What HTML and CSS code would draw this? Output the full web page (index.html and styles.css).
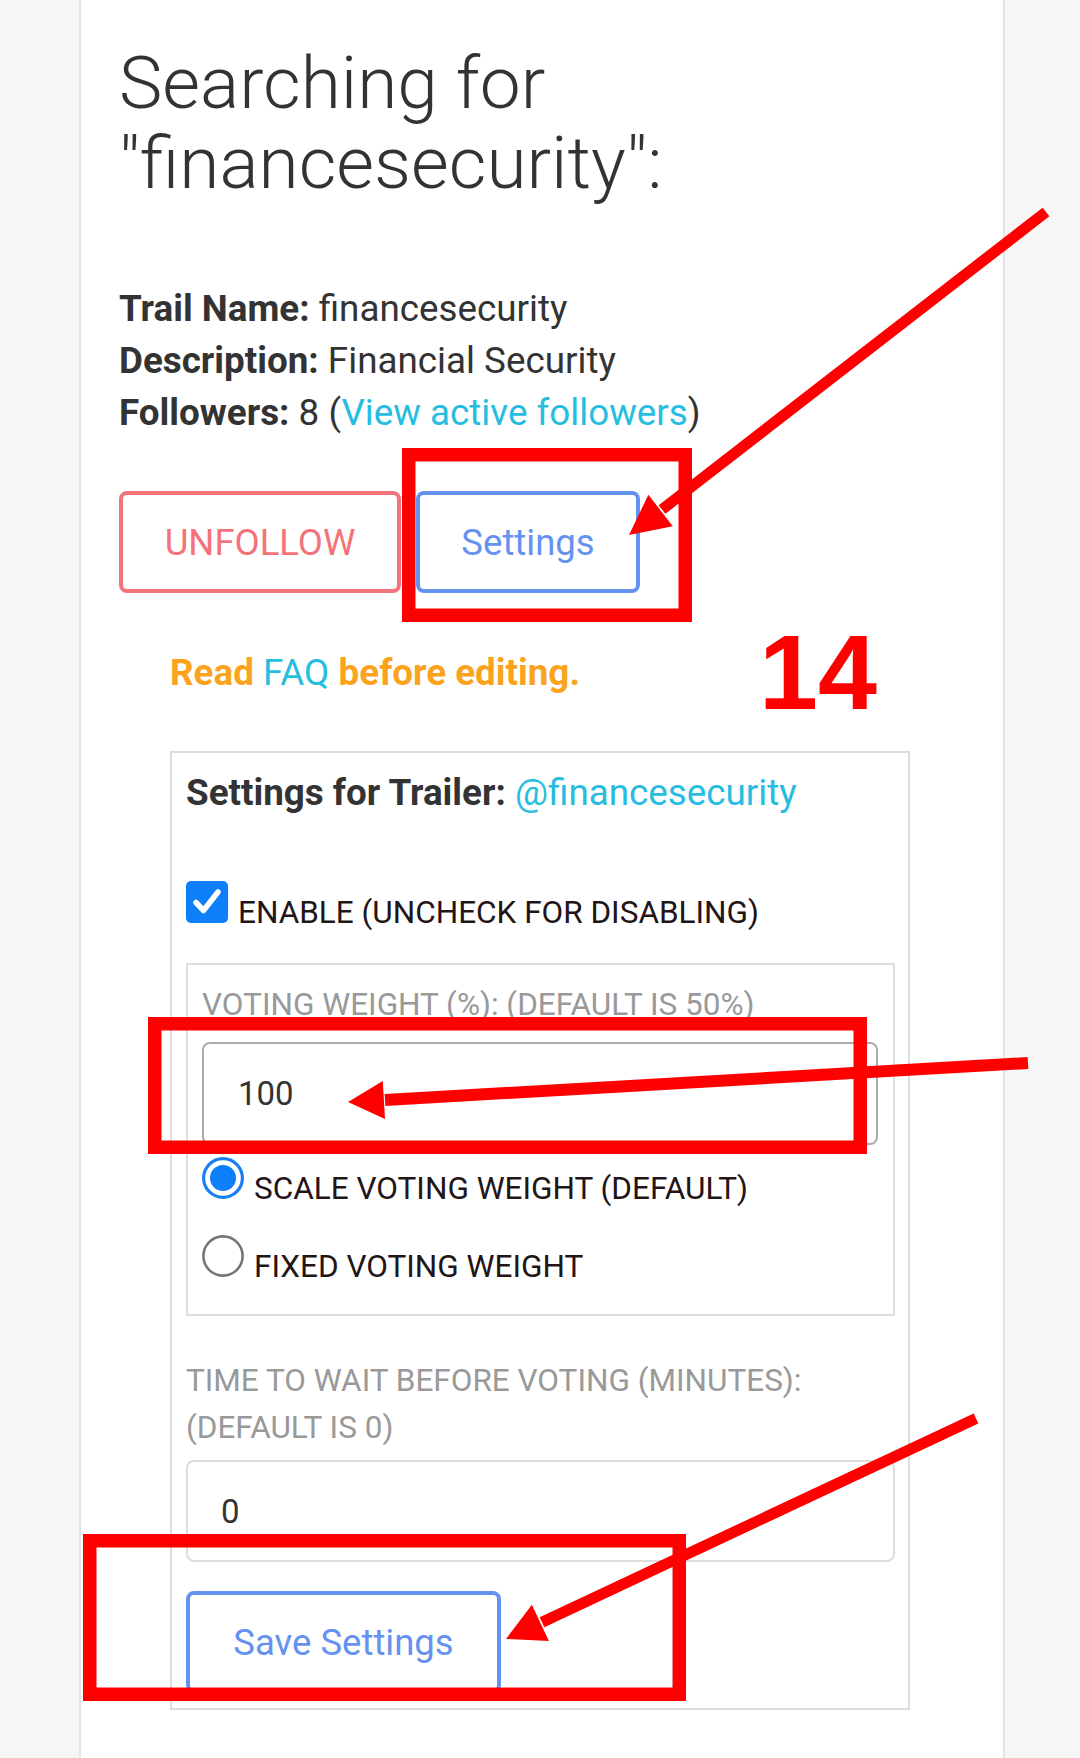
FILE: index.html
```html
<!DOCTYPE html>
<html lang="en">
<head>
<meta charset="utf-8">
<title>Searching for financesecurity</title>
<link rel="stylesheet" href="styles.css">
</head>
<body>
<div class="page">
  <div class="card">
    <h1 class="title">Searching for<br>"financesecurity":</h1>
    <div class="info">
      <div><b>Trail Name:</b> financesecurity</div>
      <div><b>Description:</b> Financial Security</div>
      <div><b>Followers:</b> 8 (<a class="link" href="#">View active followers</a>)</div>
    </div>
    <div class="actions">
      <div class="btn btn-unfollow">UNFOLLOW</div>
      <div class="btn btn-blue btn-settings">Settings</div>
    </div>
    <div class="editor">
      <div class="faq">Read <a class="link faq-link" href="#">FAQ</a> before editing.</div>
      <div class="panel">
        <div class="panel-title">Settings for Trailer: <a class="link panel-link" href="#">@financesecurity</a></div>
        <div class="check-row"><span class="checkbox"><svg viewBox="0 0 42 42" width="42" height="42"><rect x="0" y="0" width="42" height="42" rx="5" fill="#0d7ffb"/><path d="M10 21.5 L17.5 29.5 L32 11" fill="none" stroke="#fff" stroke-width="5.5" stroke-linecap="round" stroke-linejoin="round"/></svg></span>ENABLE (UNCHECK FOR DISABLING)</div>
        <div class="fieldset">
          <div class="field-label">VOTING WEIGHT (%): (DEFAULT IS 50%)</div>
          <div class="input input-dark">100</div>
          <div class="radio-row radio-row-first"><span class="radio"><svg viewBox="0 0 42 42" width="42" height="42"><circle cx="21" cy="21" r="19.4" fill="#fff" stroke="#1a7ef5" stroke-width="3.2"/><circle cx="21" cy="21" r="13" fill="#0d7ffb"/></svg></span>SCALE VOTING WEIGHT (DEFAULT)</div>
          <div class="radio-row radio-row-second"><span class="radio"><svg viewBox="0 0 42 42" width="42" height="42"><circle cx="21" cy="21" r="19.6" fill="#fff" stroke="#757575" stroke-width="2.6"/></svg></span>FIXED VOTING WEIGHT</div>
        </div>
        <div class="time-label">TIME TO WAIT BEFORE VOTING (MINUTES): (DEFAULT IS 0)</div>
        <div class="input input-light">0</div>
        <div class="btn btn-blue btn-save">Save Settings</div>
      </div>
    </div>
  </div>

  <svg class="annotations" viewBox="0 0 1080 1758" width="1080" height="1758">
    <g fill="none" stroke="#fe0000" stroke-width="13.5">
      <rect x="408.75" y="454.75" width="276.5" height="160.5"/>
      <rect x="154.75" y="1023.75" width="705.5" height="123.5"/>
      <rect x="89.75" y="1540.75" width="589.5" height="153.5"/>
    </g>
    <g stroke="#fe0000" fill="#fe0000">
      <line x1="1046" y1="212" x2="662" y2="509.5" stroke-width="11"/>
      <polygon points="629,535 672.8,526.3 648.4,494.7" stroke="none"/>
      <line x1="1028" y1="1063" x2="385" y2="1100" stroke-width="12"/>
      <polygon points="348,1102 385,1118.9 382.8,1080.9" stroke="none"/>
      <line x1="976" y1="1418.5" x2="542" y2="1622.2" stroke-width="11"/>
      <polygon points="506,1639 548.9,1641 531.9,1604.8" stroke="none"/>
    </g>
    <text class="step-number" x="759" y="709">14</text>
  </svg>
</div>
</body>
</html>
```
FILE: styles.css
```css
html, body {
  margin: 0;
  padding: 0;
}

body {
  background: #f6f6f6;
  font-family: Roboto, "Noto Sans", "Liberation Sans", sans-serif;
  color: #333333;
}

.page {
  position: relative;
  width: 1080px;
  height: 1758px;
  overflow: hidden;
}

.card {
  box-sizing: border-box;
  margin-left: 79px;
  width: 926px;
  min-height: 1758px;
  background: #ffffff;
  border-left: 2px solid #e4e4e4;
  border-right: 2px solid #e4e4e4;
  padding: 43px 38px 0 38px;
}

.title {
  margin: 0;
  font-size: 73px;
  line-height: 80px;
  font-weight: 300;
  color: #333333;
}

.info {
  margin-top: 80px;
  font-size: 36.8px;
  line-height: 52px;
}

.info b {
  font-weight: 700;
}

.link {
  color: #27bde0;
  text-decoration: none;
}

.actions {
  margin-top: 52px;
  display: flex;
  gap: 15px;
}

.btn {
  box-sizing: border-box;
  height: 102px;
  border: 4px solid;
  border-radius: 8px;
  background: #ffffff;
  font-size: 36.5px;
  font-weight: 400;
  display: flex;
  align-items: center;
  justify-content: center;
}

.btn-unfollow {
  width: 282px;
  border-color: #f4737b;
  color: #f4737b;
}

.btn-blue {
  border-color: #6592f0;
  color: #6592f0;
}

.btn-settings {
  width: 224px;
}

.editor {
  margin-left: 51px;
}

.faq {
  margin-top: 54px;
  font-size: 36.8px;
  line-height: 52px;
  font-weight: 700;
  color: #fba31c;
}

.faq-link {
  font-weight: 400;
}

.panel {
  box-sizing: border-box;
  margin-top: 52px;
  width: 740px;
  border: 2px solid #dddddd;
  padding: 13px 13px 15px 14px;
}

.panel-title {
  font-size: 36.8px;
  line-height: 54px;
  font-weight: 700;
  color: #333333;
}

.panel-link {
  font-weight: 400;
}

.check-row {
  margin-top: 61px;
  font-size: 31.5px;
  line-height: 48px;
  color: #231416;
}

.checkbox,
.radio {
  display: inline-block;
  width: 42px;
  height: 42px;
  margin-right: 10px;
  vertical-align: baseline;
}

.checkbox svg,
.radio svg {
  display: block;
}

.fieldset {
  margin-top: 25.6px;
  border: 2px solid #dddddd;
  padding: 18px 15px 25px 14px;
}

.field-label {
  font-size: 31.5px;
  line-height: 44px;
  color: #999999;
}

.input {
  box-sizing: border-box;
  border-radius: 8px;
  font-size: 33px;
  color: #333333;
  display: flex;
  align-items: center;
}

.input-dark {
  margin-top: 15px;
  height: 103px;
  border: 2px solid #ababab;
  padding-left: 34px;
}

.radio-row {
  font-size: 31.5px;
  line-height: 44px;
  color: #231416;
}

.radio-row-first {
  margin-top: 12px;
}

.radio-row-second {
  margin-top: 24.6px;
}

.time-label {
  margin-top: 41px;
  font-size: 31.5px;
  line-height: 47px;
  color: #999999;
}

.input-light {
  margin-top: 9px;
  height: 102px;
  border: 2px solid #dddddd;
  padding-left: 33px;
}

.btn-save {
  margin-top: 29px;
  width: 315px;
}

.annotations {
  position: absolute;
  top: 0;
  left: 0;
  pointer-events: none;
}

.step-number {
  font-family: "Liberation Sans", Arial, sans-serif;
  font-weight: 700;
  font-size: 106px;
  fill: #fe0000;
}
```
